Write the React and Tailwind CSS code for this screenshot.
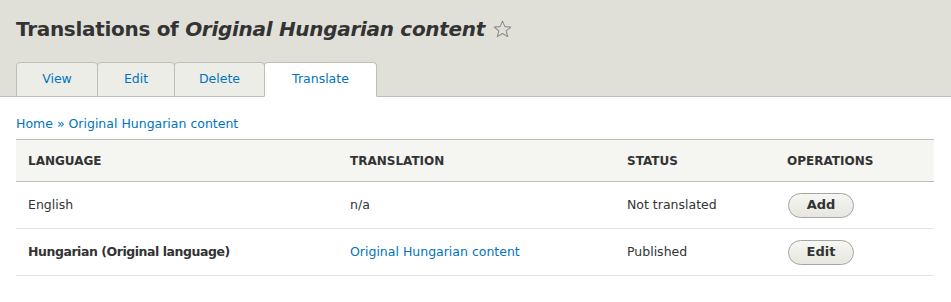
import React from 'react';

const tabs = [
  { label: 'View', w: 'w-[82px]' },
  { label: 'Edit', w: 'w-[78px]' },
  { label: 'Delete', w: 'w-[91px]' },
  { label: 'Translate', w: 'w-[113px]', active: true },
];

const rows = [
  { lang: 'English', trans: 'n/a', status: 'Not translated', op: 'Add' },
  { lang: 'Hungarian (Original language)', trans: 'Original Hungarian content', link: true, bold: true, status: 'Published', op: 'Edit' },
];

const Star = () => (
  <svg width="19" height="18" viewBox="0 0 20 19" className="ml-2">
    <path
      d="M10 1.2 L12.5 7 L18.7 7.4 L13.9 11.4 L15.5 17.5 L10 14.2 L4.5 17.5 L6.1 11.4 L1.3 7.4 L7.5 7 Z"
      fill="none"
      stroke="#8c8c80"
      strokeWidth="1.1"
      strokeLinejoin="round"
    />
  </svg>
);

export default function App() {
  return (
    <div className="w-[951px] h-[302px] bg-white font-['DejaVu_Sans',sans-serif] text-[#333]">
      <header className="bg-[#e0e0d8] border-b border-[#bfbfba] h-[97px] px-4">
        <div className="flex items-center pt-[8px] h-[50px]">
          <h1 className="text-[20px] font-bold leading-none tracking-[-0.3px]">
            Translations of <em>Original Hungarian content</em>
          </h1>
          <Star />
        </div>
        <nav className="flex mt-[12px]">
          {tabs.map(t => (
            <a
              key={t.label}
              className={`${t.w} h-[35px] flex items-center justify-center text-[12.5px] text-[#0074bd] border border-[#bfbfba] rounded-t-[4px] -ml-px first:ml-0 ${
                t.active ? 'bg-white border-b-white relative z-10' : 'bg-[#ededE8]'
              }`}
            >
              {t.label}
            </a>
          ))}
        </nav>
      </header>

      <div className="px-4">
        <div className="pt-[19px] pb-[7px] text-[12.5px] text-[#0074bd] leading-4">
          Home » Original Hungarian content
        </div>
        <table className="w-[918px] border-collapse text-[12.5px]">
          <thead>
            <tr className="bg-[#f5f5f2] border-y border-[#bfbfba] h-[42px]">
              <th className="text-left pl-3 w-[334px] text-[12px] font-bold uppercase">Language</th>
              <th className="text-left w-[277px] text-[12px] font-bold uppercase">Translation</th>
              <th className="text-left w-[160px] text-[12px] font-bold uppercase">Status</th>
              <th className="text-left text-[12px] font-bold uppercase">Operations</th>
            </tr>
          </thead>
          <tbody>
            {rows.map(r => (
              <tr key={r.lang} className="border-b border-[#e6e4df] h-[47px]">
                <td className={`pl-3 ${r.bold ? 'font-bold tracking-[-0.45px]' : ''}`}>{r.lang}</td>
                <td className={r.link ? 'text-[#0074bd]' : ''}>{r.trans}</td>
                <td>{r.status}</td>
                <td>
                  <button className="w-[66px] h-[25px] rounded-full border border-[#a6a6a6] bg-gradient-to-b from-[#f6f6f3] to-[#e7e7df] text-[13px] font-bold text-[#333] ml-px">
                    {r.op}
                  </button>
                </td>
              </tr>
            ))}
          </tbody>
        </table>
      </div>
    </div>
  );
}
